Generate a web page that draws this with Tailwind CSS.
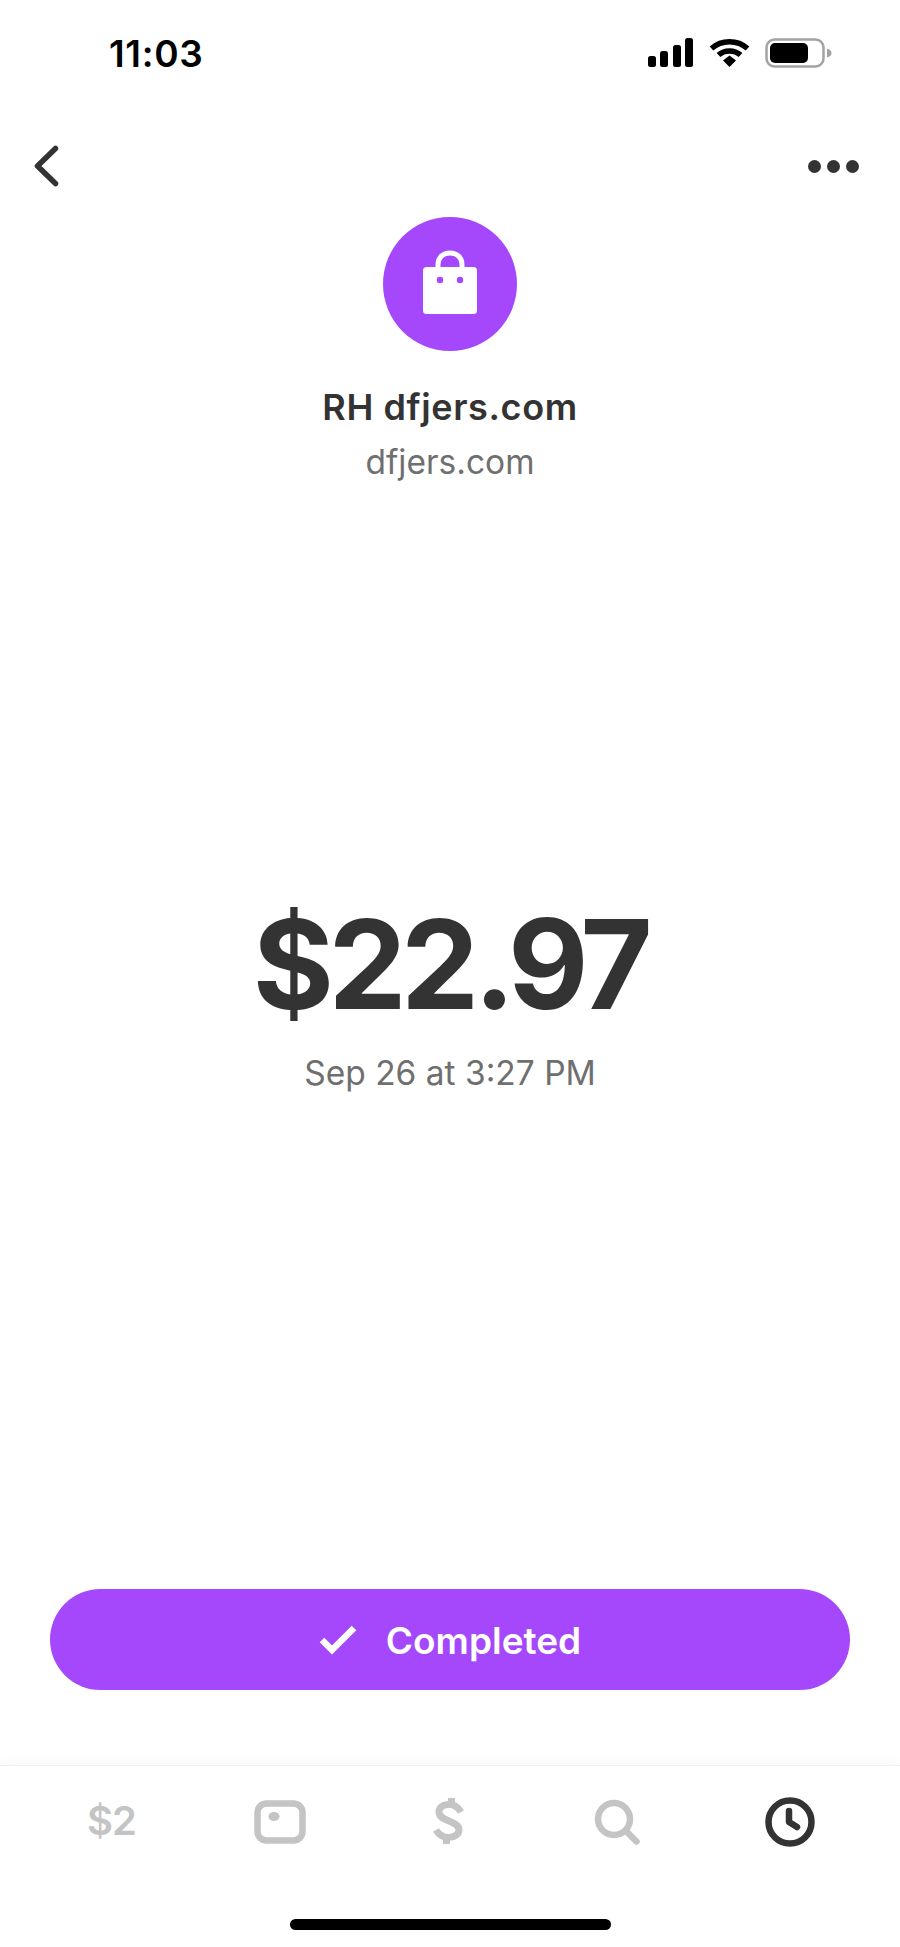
<!DOCTYPE html>
<html lang="en">
  <head>
    <meta charset="UTF-8" />
    <meta name="viewport" content="width=device-width, initial-scale=1.0" />
    <title>Payment Details</title>
    <script src="https://cdn.jsdelivr.net/npm/@tailwindcss/browser@4"></script>
  </head>
  <body class="bg-white font-[Inter,sans-serif] text-[#333333]">
    <div class="w-[900px] h-[1947px] flex flex-col overflow-hidden">
      <!-- Status bar -->
      <div class="h-[106px] flex items-start justify-between pl-[109px] pr-[68px] pt-[34px] text-black">
        <span class="text-[37px] leading-[40px] font-semibold tracking-[0.7px]">11:03</span>
        <div class="flex items-center gap-[15px] pt-[4px]">
          <svg width="46" height="30" viewBox="0 0 46 30" fill="#000">
            <rect x="0" y="18" width="8" height="11" rx="2.5" />
            <rect x="12" y="13" width="8" height="16" rx="2.5" />
            <rect x="25" y="7" width="8" height="22" rx="2.5" />
            <rect x="37" y="0" width="8" height="29" rx="2.5" />
          </svg>
          <svg width="41" height="30" viewBox="0 0 41 30" fill="none" stroke="#000" stroke-width="5.5">
            <path d="M2.5 10.5C12.5 1.5 28.500 1.500 38.500 10.500" />
            <path d="M9.500 17C15.500 11.500 25.500 11.500 31.500 17" />
            <path d="M14 22.500L20.500 17.500L27 22.500L20.500 29Z" fill="#000" stroke="none" />
          </svg>
          <svg width="67" height="30" viewBox="0 0 67 30" fill="none">
            <rect x="1.500" y="1.500" width="57" height="27" rx="8" stroke="#a3a3a3" stroke-width="2.500" />
            <rect x="5" y="5" width="38" height="20" rx="5" fill="#000" />
            <path d="M62 10.500C65 11.500 66.500 13 66.500 15C66.500 17 65 18.500 62 19.500Z" fill="#a3a3a3" />
          </svg>
        </div>
      </div>

      <!-- Nav -->
      <div class="h-[111px] flex items-start justify-between pl-[32px] pr-[41px] pt-[38px]">
        <svg width="28" height="44" viewBox="0 0 28 44" fill="none" stroke="#333333" stroke-width="5.500" stroke-linecap="round" stroke-linejoin="round">
          <path d="M23.500 4.500L5.500 22L23.500 39.500" />
        </svg>
        <div class="flex gap-[6px] pt-[16px]">
          <span class="size-[13px] rounded-full bg-[#333333]"></span>
          <span class="size-[13px] rounded-full bg-[#333333]"></span>
          <span class="size-[13px] rounded-full bg-[#333333]"></span>
        </div>
      </div>

      <!-- Merchant -->
      <div class="flex flex-col items-center">
        <div class="size-[134px] rounded-full bg-[#a548fb] flex items-center justify-center">
          <svg width="54" height="64" viewBox="0 0 54 64" fill="none" class="mb-[4px]">
            <path d="M15 19V14.500C15 7.500 20 3 27 3C34 3 39 7.500 39 14.500V19" stroke="#fff" stroke-width="5" />
            <rect x="0" y="17" width="54" height="47" rx="3.500" fill="#fff" />
            <circle cx="17" cy="30" r="3.200" fill="#a548fb" />
            <circle cx="37" cy="30" r="3.200" fill="#a548fb" />
          </svg>
        </div>
        <div class="mt-[33px] text-[36px] leading-[46px] font-semibold tracking-[0.6px]">RH dfjers.com</div>
        <div class="mt-[12px] text-[33.5px] leading-[40px] text-[#6f6f6f]">dfjers.com</div>
      </div>

      <!-- Amount -->
      <div class="mt-[414px] flex flex-col items-center">
        <div class="text-[124px] leading-[136px] font-bold tracking-[-5.5px]">$22.97</div>
        <div class="mt-[21px] text-[33.5px] leading-[40px] text-[#6f6f6f]">Sep 26 at 3:27 PM</div>
      </div>

      <!-- Status button -->
      <div class="mt-[496px] px-[50px]">
        <div class="h-[101px] rounded-full bg-[#a548fb] flex items-center justify-center gap-[29px] text-white">
          <svg width="38" height="30" viewBox="0 0 38 30" fill="none" stroke="#fff" stroke-width="6.500">
            <path d="M3 15L13 25L35 3" />
          </svg>
          <span class="mt-[3px] text-[37px] leading-[44px] font-semibold">Completed</span>
        </div>
      </div>

      <!-- Tab bar -->
      <div class="mt-[75px] flex-1 border-t border-[#f1f1f1] shadow-[0_-6px_10px_rgba(0,0,0,0.02)] flex flex-col">
        <div class="h-[153px] flex items-start pl-[87px] pt-[30px] text-[#c4c4c4]">
          <span class="w-[48px] text-[40px] leading-[50px] font-semibold tracking-[-1px]">$2</span>
          <svg width="52" height="44" viewBox="0 0 52 44" fill="none" class="mt-[4px] ml-[119px]">
            <rect x="3.500" y="3.500" width="45" height="37" rx="9" stroke="#c4c4c4" stroke-width="6.500" />
            <ellipse cx="20" cy="16.500" rx="5.500" ry="4.500" fill="#c4c4c4" />
          </svg>
          <svg width="32" height="46" viewBox="0 0 32 46" fill="none" stroke="#c4c4c4" stroke-width="7" class="mt-[2px] ml-[127px]">
            <path d="M18.500 0V8M13.500 38V46" />
            <path d="M28 14C25 9 20.500 6.500 16 6.500C10 6.500 6 9.500 6 14C6 19 11 21 16 23C22 25.500 26 27.500 26 32C26 36.500 21 39.500 16 39.500C11 39.500 6 37 3 32" />
          </svg>
          <svg width="48" height="48" viewBox="0 0 48 48" fill="none" stroke="#c4c4c4" stroke-width="6.500" stroke-linecap="round" class="mt-[2px] ml-[128px]">
            <circle cx="21" cy="21" r="16" />
            <path d="M33 33L43.500 43.500" />
          </svg>
          <svg width="52" height="52" viewBox="0 0 52 52" fill="none" stroke="#333333" stroke-width="6.500" stroke-linecap="round" stroke-linejoin="round" class="ml-[123px]">
            <circle cx="26" cy="26" r="21.500" />
            <path d="M25 15V26L33 31" />
          </svg>
        </div>
        <div class="flex justify-center">
          <span class="w-[321px] h-[11px] rounded-full bg-black"></span>
        </div>
      </div>
    </div>
  </body>
</html>
